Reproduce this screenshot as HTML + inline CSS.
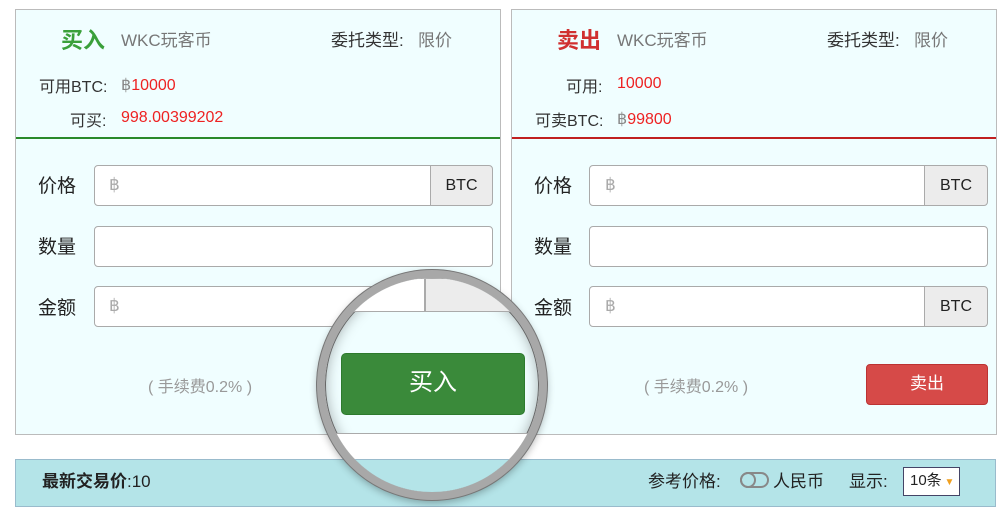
<!DOCTYPE html>
<html><head><meta charset="utf-8"><style>
*{box-sizing:border-box;margin:0;padding:0}
body{width:1000px;height:507px;background:#fff;position:relative;overflow:hidden;font-family:"Liberation Sans","Noto Sans CJK SC",sans-serif;color:#222}
.a{position:absolute;white-space:nowrap}
.panel{position:absolute;top:9px;width:486px;height:426px;background:#f0feff;border:1px solid #bbb}
.inp{position:absolute;height:41px;background:#fff;border:1px solid #aaa;border-radius:4px}
.add{position:absolute;height:41px;background:#ececec;border:1px solid #aaa;border-radius:0 4px 4px 0;font-size:16px;text-align:center;line-height:39px;color:#222}
.b{color:#aaa;font-size:17px}
.lbl{font-size:19px;color:#222}
</style></head><body>

<div class="panel" style="left:15px"></div>
<div class="panel" style="left:511px"></div>
<div class="a" style="left:16px;top:137px;width:484px;height:2px;background:#2a8a2a"></div>
<div class="a" style="left:512px;top:137px;width:484px;height:2px;background:#c02020"></div>

<div class="a" style="left:61px;top:23px;font-size:22px;color:#3aa03a;font-weight:bold">买入</div>
<div class="a" style="left:121px;top:26px;font-size:17px;color:#777">WKC玩客币</div>
<div class="a" style="left:331px;top:26px;font-size:17px;color:#333">委托类型:</div>
<div class="a" style="left:418px;top:26px;font-size:17px;color:#777">限价</div>
<div class="a" style="left:39px;top:73px;font-size:16px;color:#333">可用BTC:</div>
<div class="a" style="left:121px;top:75px;font-size:16px;color:#e22"><span style="color:#888">฿</span>10000</div>
<div class="a" style="left:70px;top:107px;font-size:16px;color:#333">可买:</div>
<div class="a" style="left:121px;top:109px;font-size:16px;color:#e22">998.00399202</div>

<div class="a" style="left:557px;top:23px;font-size:22px;color:#d03030;font-weight:bold">卖出</div>
<div class="a" style="left:617px;top:26px;font-size:17px;color:#777">WKC玩客币</div>
<div class="a" style="left:827px;top:26px;font-size:17px;color:#333">委托类型:</div>
<div class="a" style="left:914px;top:26px;font-size:17px;color:#777">限价</div>
<div class="a" style="left:566px;top:73px;font-size:16px;color:#333">可用:</div>
<div class="a" style="left:617px;top:75px;font-size:16px;color:#e22">10000</div>
<div class="a" style="left:535px;top:107px;font-size:16px;color:#333">可卖BTC:</div>
<div class="a" style="left:617px;top:109px;font-size:16px;color:#e22"><span style="color:#888">฿</span>99800</div>

<div class="a lbl" style="left:38px;top:171px">价格</div>
<div class="inp" style="left:94px;top:165px;width:337px;border-radius:4px 0 0 4px"></div>
<div class="a b" style="left:109px;top:175px">฿</div>
<div class="add" style="left:430px;top:165px;width:63px">BTC</div>
<div class="a lbl" style="left:38px;top:232px">数量</div>
<div class="inp" style="left:94px;top:226px;width:399px"></div>
<div class="a lbl" style="left:38px;top:293px">金额</div>
<div class="inp" style="left:94px;top:286px;width:337px;border-radius:4px 0 0 4px"></div>
<div class="a b" style="left:109px;top:296px">฿</div>
<div class="add" style="left:430px;top:286px;width:63px">BTC</div>
<div class="a" style="left:148px;top:373px;font-size:16px;color:#999">( 手续费0.2% )</div>

<div class="a lbl" style="left:534px;top:171px">价格</div>
<div class="inp" style="left:589px;top:165px;width:336px;border-radius:4px 0 0 4px"></div>
<div class="a b" style="left:605px;top:175px">฿</div>
<div class="add" style="left:924px;top:165px;width:64px">BTC</div>
<div class="a lbl" style="left:534px;top:232px">数量</div>
<div class="inp" style="left:589px;top:226px;width:399px"></div>
<div class="a lbl" style="left:534px;top:293px">金额</div>
<div class="inp" style="left:589px;top:286px;width:336px;border-radius:4px 0 0 4px"></div>
<div class="a b" style="left:605px;top:296px">฿</div>
<div class="add" style="left:924px;top:286px;width:64px">BTC</div>
<div class="a" style="left:644px;top:373px;font-size:16px;color:#999">( 手续费0.2% )</div>
<div class="a" style="left:866px;top:364px;width:122px;height:41px;background:#d64a48;border:1px solid #b33;border-radius:4px;color:#fff;font-size:17px;text-align:center;line-height:37px">卖出</div>

<div class="a" style="left:15px;top:459px;width:981px;height:48px;background:#b4e4e8;border:1px solid #9bc"></div>
<div class="a" style="left:42px;top:467px;font-size:17px;color:#222"><b>最新交易价</b>:10</div>
<div class="a" style="left:648px;top:467px;font-size:17px;color:#222">参考价格:</div>
<div class="a" style="left:740px;top:472px;width:29px;height:16px;border:2px solid #888;border-radius:8px"></div>
<div class="a" style="left:740px;top:472px;width:16px;height:16px;border:2px solid #888;border-radius:50%"></div>
<div class="a" style="left:773px;top:467px;font-size:17px;color:#222">人民币</div>
<div class="a" style="left:849px;top:467px;font-size:17px;color:#222">显示:</div>
<div class="a" style="left:903px;top:467px;width:57px;height:29px;background:#fff;border:1px solid #446;font-size:15px;line-height:25px;padding-left:6px">10条<span style="color:#f0a020;font-size:10px"> ▼</span></div>

<div class="a" style="left:317px;top:270px;width:230px;height:230px;border-radius:50%;overflow:hidden;background:#f0feff;border:8px solid #a8a8a8;box-shadow:0 0 0 1px #777,inset 0 0 0 1px #666,inset 0 0 14px rgba(0,0,0,.35),0 3px 8px rgba(0,0,0,.3)">
 <div class="a" style="left:-10px;top:0;width:110px;height:34px;background:#fff;border:1px solid #aaa"></div>
 <div class="a" style="left:100px;top:0;width:160px;height:34px;background:#ececec;border:1px solid #aaa"></div>
 <div class="a" style="left:-10px;top:155px;width:300px;height:1px;background:#aaa"></div>
 <div class="a" style="left:-10px;top:156px;width:300px;height:25px;background:#fff"></div>
 <div class="a" style="left:-10px;top:181px;width:300px;height:60px;background:#b4e4e8;border-top:1px solid #9bc"></div>
 <div class="a" style="left:16px;top:75px;width:184px;height:62px;background:#3a8a3a;border:1px solid #2d7a2d;border-radius:5px;color:#fff;font-size:24px;text-align:center;line-height:58px">买入</div>
</div>
</body></html>
